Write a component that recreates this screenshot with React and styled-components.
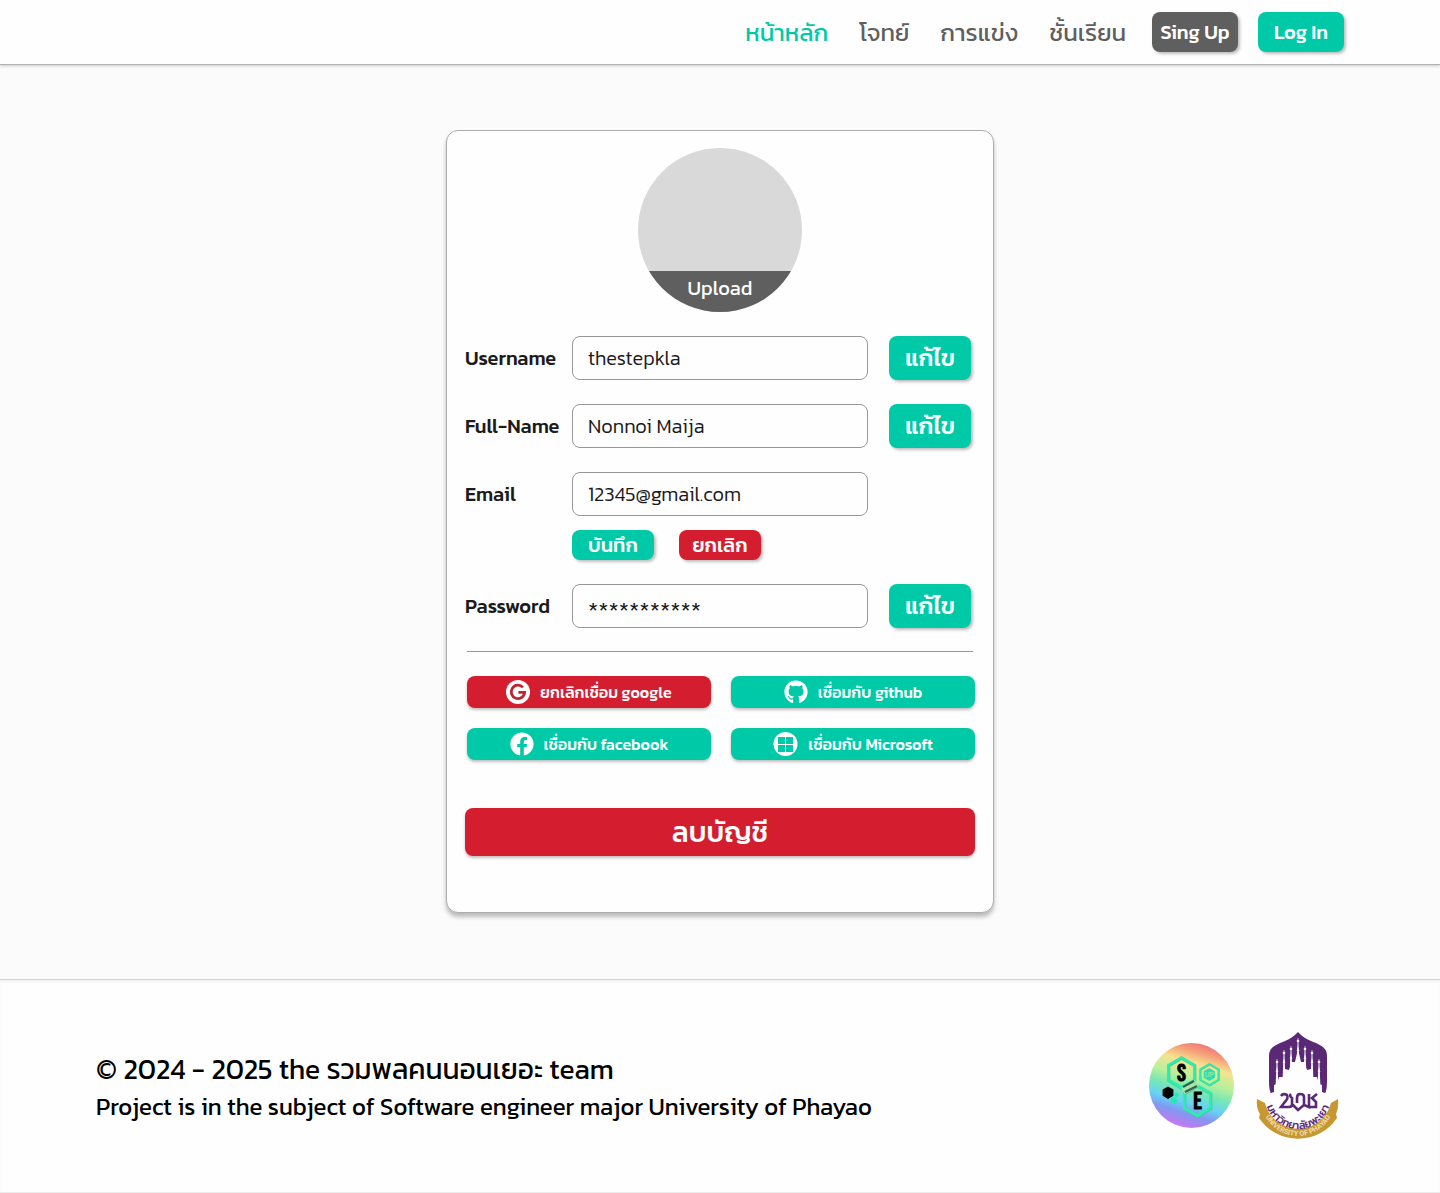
import React, { useState } from 'react';
import styled, { createGlobalStyle } from 'styled-components';
import { FaGithub, FaFacebook } from 'react-icons/fa';

const GREEN = '#00c9a7';
const RED = '#d41e2f';
const GREY = '#5f5f5f';

const GlobalStyle = createGlobalStyle`
  *, *::before, *::after { box-sizing: border-box; }
  body {
    margin: 0;
    background: #fbfbfb;
    color: #1b1b1b;
    font-family: Kanit, Roboto, "Noto Sans Thai", "Noto Sans", sans-serif;
  }
  button, input { font-family: inherit; }
`;

const Page = styled.div`
  display: flex;
  flex-direction: column;
  min-height: 100vh;
`;

const Header = styled.header`
  display: flex;
  align-items: center;
  justify-content: flex-end;
  gap: 26px;
  height: 65px;
  padding: 0 96px;
  background: #fefefe;
  border-bottom: 1px solid #b4b4b4;
  box-shadow: 0 1px 3px rgba(0, 0, 0, 0.2);
`;

const Nav = styled.nav`
  display: flex;
  align-items: center;
  gap: 31px;
  padding-top: 2px;
`;

const NavLink = styled.a`
  color: ${({ $active }) => ($active ? GREEN : GREY)};
  font-size: 24px;
  line-height: 36px;
  text-decoration: none;
  white-space: nowrap;
`;

const Actions = styled.div`
  display: flex;
  gap: 20px;
`;

const Button = styled.button`
  display: inline-flex;
  align-items: center;
  justify-content: center;
  border: 0;
  border-radius: 8px;
  padding: 0;
  color: #fff;
  background: ${({ $color }) => $color || GREEN};
  font-weight: 500;
  white-space: nowrap;
  cursor: pointer;
  box-shadow: 2px 2px 3px rgba(0, 0, 0, 0.25);
`;

const HeaderButton = styled(Button)`
  width: 86px;
  height: 40px;
  font-size: 20px;
`;

const Main = styled.main`
  flex: 1;
  display: flex;
  justify-content: center;
  align-items: flex-start;
  padding: 65px 16px 66px;
`;

const Card = styled.form`
  display: flex;
  flex-direction: column;
  width: 100%;
  max-width: 548px;
  padding: 17px 18px 56px;
  background: #fefefe;
  border: 1px solid #acacac;
  border-radius: 12px;
  box-shadow: 0 4px 4px rgba(0, 0, 0, 0.25);
`;

const Avatar = styled.div`
  display: flex;
  flex-direction: column;
  justify-content: flex-end;
  align-self: center;
  width: 164px;
  height: 164px;
  margin-bottom: 24px;
  overflow: hidden;
  border-radius: 50%;
  background: #d9d9d9;
`;

const UploadButton = styled.button`
  height: 41px;
  border: 0;
  padding: 0 0 8px;
  background: ${GREY};
  color: #fff;
  font-size: 20px;
  cursor: pointer;
`;

const Fields = styled.div`
  display: flex;
  flex-direction: column;
  gap: 24px;
`;

const Row = styled.div`
  display: grid;
  grid-template-columns: 107px minmax(0, 296px) 21px 82px;
  row-gap: 14px;
  align-items: center;
`;

const Label = styled.label`
  font-size: 20px;
  font-weight: 500;
  white-space: nowrap;
`;

const Input = styled.input`
  width: 100%;
  height: 44px;
  padding: ${({ $masked }) => ($masked ? '8px 15px 0' : '0 15px')};
  border: 1px solid #979797;
  border-radius: 8px;
  background: #fefefe;
  color: #1b1b1b;
  font-size: ${({ $masked }) => ($masked ? '24px' : '20px')};
  font-weight: 300;
`;

const EditButton = styled(Button)`
  grid-column: 4;
  height: 44px;
  padding-bottom: 2px;
  font-size: 24px;
`;

const Choices = styled.div`
  grid-column: 2;
  display: flex;
  gap: 25px;
`;

const SmallButton = styled(Button)`
  width: 82px;
  height: 30px;
  font-size: 20px;
`;

const Divider = styled.hr`
  width: calc(100% - 4px);
  margin: 23px auto 24px;
  border: 0;
  border-top: 1px solid #979797;
`;

const Providers = styled.div`
  display: grid;
  grid-template-columns: 1fr 1fr;
  gap: 20px;
  padding-left: 2px;
  margin-bottom: 48px;
`;

const ProviderButton = styled(Button)`
  gap: 10px;
  height: 32px;
  font-size: 16px;
  box-shadow: 0 2px 3px rgba(0, 0, 0, 0.25);

  svg { flex: none; }
`;

const DeleteButton = styled(Button)`
  height: 48px;
  font-size: 28px;
  box-shadow: 0 2px 3px rgba(0, 0, 0, 0.25);
`;

const Footer = styled.footer`
  display: flex;
  align-items: center;
  justify-content: space-between;
  gap: 24px;
  height: 214px;
  padding: 0 101px 0 96px;
  background: #fefefe;
  border-top: 1px solid #d2d2d2;
  border-bottom: 1px solid #ececec;
  box-shadow: inset 0 2px 2px rgba(0, 0, 0, 0.04);
`;

const Credits = styled.div`
  display: flex;
  flex-direction: column;
  gap: 2px;
  padding-top: 2px;
  color: #000;
`;

const Copyright = styled.p`
  margin: 0;
  font-size: 28px;
  line-height: 38px;
`;

const Subject = styled.p`
  margin: 0;
  font-size: 24px;
  line-height: 34px;
`;

const Logos = styled.div`
  display: flex;
  align-items: center;
  gap: 22px;
`;

function GoogleIcon() {
  return (
    <svg width="24" height="24" viewBox="0 0 24 24" aria-hidden="true">
      <circle cx="12" cy="12" r="12" fill="#fff" />
      <path
        d="M16.9 7.4A6.7 6.7 0 1 0 18.6 12.4H12.4"
        fill="none"
        stroke="#bd2533"
        strokeWidth="2.8"
      />
    </svg>
  );
}

function MicrosoftIcon() {
  return (
    <svg width="25" height="24" viewBox="0 0 25 24" aria-hidden="true">
      <circle cx="12.5" cy="12" r="12" fill="#fff" />
      <path d="M5 5h7v7H5zM13 5h7v7h-7zM5 13h7v7H5zM13 13h7v7h-7z" fill={GREEN} />
    </svg>
  );
}

function hexagon(cx, cy, r) {
  return [0, 1, 2, 3, 4, 5]
    .map((i) => {
      const a = (Math.PI / 3) * i - Math.PI / 2;
      return `${(cx + r * Math.cos(a)).toFixed(1)},${(cy + r * Math.sin(a)).toFixed(1)}`;
    })
    .join(' ');
}

function SoftwareLogo() {
  return (
    <svg width="85" height="87" viewBox="0 0 85 87" role="img" aria-label="Software Engineering">
      <defs>
        <linearGradient id="rainbow" x1="0.65" y1="0" x2="0.35" y2="1">
          <stop offset="0" stopColor="#f0717c" />
          <stop offset="0.12" stopColor="#f5a078" />
          <stop offset="0.25" stopColor="#f5e390" />
          <stop offset="0.42" stopColor="#b8f09a" />
          <stop offset="0.56" stopColor="#77e8b4" />
          <stop offset="0.7" stopColor="#66d2f5" />
          <stop offset="0.82" stopColor="#8298f2" />
          <stop offset="0.94" stopColor="#b77df0" />
          <stop offset="1" stopColor="#d58bf0" />
        </linearGradient>
      </defs>
      <circle cx="42.5" cy="42.5" r="42.5" fill="url(#rainbow)" />
      <g fill="none" stroke="#5cbb98" strokeWidth="3.2">
        <polygon points={hexagon(32.7, 30.1, 15)} />
        <polygon points={hexagon(48.7, 58.1, 15)} />
        <polygon points={hexagon(60.6, 31.8, 10.5)} strokeWidth="2" />
      </g>
      <g fill="none" stroke="#2bf0ad" strokeWidth="2.6">
        <polygon points={hexagon(32.3, 29.7, 15)} />
        <polygon points={hexagon(48.3, 57.7, 15)} />
        <polygon points={hexagon(60.3, 31.5, 10.5)} strokeWidth="1.6" />
      </g>
      <path d="M32 45l14-8 4 6-14 8z" fill="#9ee9a8" />
      <path d="M34 44l11-6M36 49l12-6" stroke="#3c5b50" strokeWidth="2" />
      <polygon points={hexagon(60.3, 31.5, 6.5)} fill="#30dfb0" />
      <text x="60.3" y="34" textAnchor="middle" fontSize="7" fill="#9af5a0" fontFamily="Roboto, sans-serif">UP</text>
      <polygon points={hexagon(19, 49.7, 6.2)} fill="#000" />
      <circle cx="27.5" cy="51.7" r="2.2" fill="#27e8b5" />
      <circle cx="25" cy="57.5" r="3.2" fill="#27e8b5" />
      <g fill="#000" fontFamily="'Bebas Neue', Oswald, 'Roboto Condensed', 'Liberation Sans Narrow', sans-serif" fontSize="24" fontWeight="700" textAnchor="middle">
        <text x="32.5" y="38">S</text>
        <text x="48.5" y="66">E</text>
      </g>
    </svg>
  );
}

function UniversityLogo() {
  const spires = [
    [42, 6, 36],
    [35, 14, 42],
    [49, 14, 42],
    [28, 18, 48],
    [56, 18, 48],
    [21, 27, 54],
    [63, 27, 54],
  ];
  return (
    <svg width="83" height="108" viewBox="0 0 83 108" role="img" aria-label="University of Phayao">
      <defs>
        <path id="thai-arc" d="M9 64A33 33 0 0 0 75 64" />
        <path id="latin-arc" d="M7 79A37 37 0 0 0 77 79" />
      </defs>
      <path
        d="M42 0C47 6 55 9 62 12C68 15 71 18 71 24V50Q71 62 66 66H18Q13 62 13 50V24C13 18 16 15 22 12C29 9 37 6 42 0Z"
        fill="#5b2876"
      />
      <g fill="#fefefe">
        <path d="M42 17L45 30L48 30L51 38L55 37L57 45L61 45L63 52L66 53L66 60L69 61V84H15V61L18 60L18 53L21 52L23 45L27 45L29 37L33 38L36 30L39 30Z" />
        {spires.map(([x, y, base]) => (
          <g key={x}>
            <path d={`M${x - 0.3} ${y}H${x + 0.3}L${x + 1.4} ${base}H${x - 1.4}Z`} />
            <circle cx={x} cy={y + 3} r="1.3" />
            <path d={`M${x - 1.4} ${y + 13}H${x + 1.4}L${x} ${y + 9}Z`} />
          </g>
        ))}
      </g>
      <path
        d="M25 64Q27 61 31 63Q33 66 28 71L25 75H33Q36 75 36 72V66Q33 64 35 62M36 72L42 78L48 73V65Q48 62 44 62Q41 62 41 66V71M48 73L53 75V62M53 75H60V70L56 66L61 62"
        fill="none"
        stroke="#5b2876"
        strokeWidth="2.6"
      />
      <path
        d="M1 67L9 71A34 34 0 0 0 75 71L82 67Q83 76 80 82L81 86A47 47 0 0 1 3 86L4 82Q0 76 1 67Z"
        fill="#c6982f"
      />
      <text fontSize="11" fontWeight="500" fill="#5b2876">
        <textPath href="#thai-arc" startOffset="50%" textAnchor="middle">มหาวิทยาลัยพะเยา</textPath>
      </text>
      <text fontSize="7" fontWeight="700" fill="#f2deb0" fontFamily="Roboto, sans-serif">
        <textPath href="#latin-arc" startOffset="50%" textAnchor="middle">UNIVERSITY OF PHAYAO</textPath>
      </text>
    </svg>
  );
}

const links = ['หน้าหลัก', 'โจทย์', 'การแข่ง', 'ชั้นเรียน'];

function Field({ id, label, initial, editing, masked }) {
  const [value, setValue] = useState(initial);
  return (
    <Row>
      <Label htmlFor={id}>{label}</Label>
      <Input
        id={id}
        type="text"
        $masked={masked}
        value={value}
        onChange={(e) => setValue(e.target.value)}
      />
      {editing ? (
        <Choices>
          <SmallButton type="button">บันทึก</SmallButton>
          <SmallButton type="button" $color={RED}>ยกเลิก</SmallButton>
        </Choices>
      ) : (
        <EditButton type="button">แก้ไข</EditButton>
      )}
    </Row>
  );
}

export default function App() {
  return (
    <Page>
      <GlobalStyle />
      <Header>
        <Nav>
          {links.map((text, i) => (
            <NavLink key={text} href="#" $active={i === 0}>{text}</NavLink>
          ))}
        </Nav>
        <Actions>
          <HeaderButton type="button" $color={GREY}>Sing Up</HeaderButton>
          <HeaderButton type="button">Log In</HeaderButton>
        </Actions>
      </Header>
      <Main>
        <Card>
          <Avatar>
            <UploadButton type="button">Upload</UploadButton>
          </Avatar>
          <Fields>
            <Field id="username" label="Username" initial="thestepkla" />
            <Field id="fullname" label="Full-Name" initial="Nonnoi Maija" />
            <Field id="email" label="Email" initial="12345@gmail.com" editing />
            <Field id="password" label="Password" initial="***********" masked />
          </Fields>
          <Divider />
          <Providers>
            <ProviderButton type="button" $color={RED}><GoogleIcon />ยกเลิกเชื่อม google</ProviderButton>
            <ProviderButton type="button"><FaGithub size={24} />เชื่อมกับ github</ProviderButton>
            <ProviderButton type="button"><FaFacebook size={24} />เชื่อมกับ facebook</ProviderButton>
            <ProviderButton type="button"><MicrosoftIcon />เชื่อมกับ Microsoft</ProviderButton>
          </Providers>
          <DeleteButton type="button" $color={RED}>ลบบัญชี</DeleteButton>
        </Card>
      </Main>
      <Footer>
        <Credits>
          <Copyright>© 2024 - 2025 the รวมพลคนนอนเยอะ team</Copyright>
          <Subject>Project is in the subject of Software engineer major University of Phayao</Subject>
        </Credits>
        <Logos>
          <SoftwareLogo />
          <UniversityLogo />
        </Logos>
      </Footer>
    </Page>
  );
}
